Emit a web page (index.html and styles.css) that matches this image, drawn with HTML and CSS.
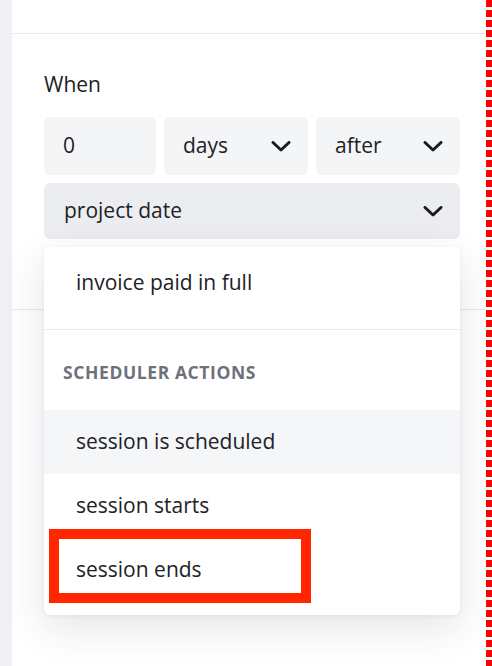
FILE: index.html
```html
<!DOCTYPE html>
<html lang="en">
<head>
<meta charset="utf-8">
<title>When trigger</title>
<link rel="stylesheet" href="styles.css">
</head>
<body>
<div class="page">
  <div class="strip"></div>
  <main class="panel">
    <div class="top"></div>
    <section class="when">
      <div class="label">When</div>
      <div class="row">
        <div class="field">0</div>
        <div class="field select">
          <span>days</span>
          <svg class="chev" viewBox="0 0 20 11"><path d="M2 1.5 L10 9 L18 1.5"/></svg>
        </div>
        <div class="field select">
          <span>after</span>
          <svg class="chev" viewBox="0 0 20 11"><path d="M2 1.5 L10 9 L18 1.5"/></svg>
        </div>
      </div>
      <div class="combo">
        <div class="field select wide">
          <span>project date</span>
          <svg class="chev" viewBox="0 0 20 11"><path d="M2 1.5 L10 9 L18 1.5"/></svg>
        </div>
        <div class="menu">
          <div class="group first">
            <div class="item">invoice paid in full</div>
          </div>
          <div class="group">
            <div class="heading">SCHEDULER ACTIONS</div>
            <div class="item hover">session is scheduled</div>
            <div class="item">session starts</div>
            <div class="item">session ends</div>
          </div>
          <div class="highlight"></div>
        </div>
      </div>
    </section>
  </main>
  <div class="dash"></div>
</div>
</body>
</html>
```

FILE: styles.css
```css
* { box-sizing: border-box; }
html, body {
  margin: 0;
  padding: 0;
}
body {
  font-family: "Open Sans", Lato, sans-serif;
  color: #212226;
  background: #ffffff;
}
.page {
  display: flex;
  width: 492px;
  height: 666px;
  overflow: hidden;
}
.strip {
  width: 12px;
  flex: none;
  background: #eff0f3;
}
.panel {
  flex: 1;
  background: #ffffff;
  display: flex;
  flex-direction: column;
}
.top {
  height: 34px;
  border-bottom: 1px solid #e7e8eb;
  flex: none;
}
.when {
  padding: 38px 26px 70px 32px;
  border-bottom: 1px solid #e7e8eb;
}
.label {
  font-size: 21px;
  line-height: 24px;
  margin-bottom: 21px;
}
.row {
  display: grid;
  grid-template-columns: 112px 144px 144px;
  gap: 8px;
  margin-bottom: 8px;
}
.field {
  height: 58px;
  background: #f4f5f7;
  border-radius: 6px;
  display: flex;
  align-items: center;
  padding: 0 17px 3px 19px;
  font-size: 21px;
}
.select {
  justify-content: space-between;
}
.chev {
  width: 20px;
  height: 11px;
  fill: none;
  stroke: #1a1b1e;
  stroke-width: 3;
  stroke-linecap: round;
  stroke-linejoin: round;
  margin-top: 3px;
}
.combo {
  position: relative;
}
.wide {
  height: 56px;
  background: #ecedf0;
  padding-left: 20px;
}
.menu {
  position: absolute;
  top: 64px;
  left: 0;
  right: 0;
  background: #ffffff;
  border-radius: 6px;
  box-shadow: 0 12px 40px rgba(40, 50, 80, 0.13), 0 1px 4px rgba(40, 50, 80, 0.06);
  padding: 4px 0 13px;
  z-index: 2;
}
.group.first {
  padding-bottom: 14px;
  border-bottom: 1px solid #e7e8eb;
}
.item {
  height: 64px;
  display: flex;
  align-items: center;
  padding: 0 0 3px 32px;
  font-size: 21px;
}
.item.hover {
  background: #f5f6f8;
}
.heading {
  height: 80px;
  padding: 30px 0 0 19px;
  font-size: 17.5px;
  line-height: 24px;
  font-weight: 700;
  letter-spacing: 0.6px;
  color: #6e717b;
}
.highlight {
  position: absolute;
  left: 5px;
  top: 282px;
  width: 262px;
  height: 74px;
  border: 10px solid #ff2600;
}
.dash {
  width: 6px;
  flex: none;
  background: repeating-linear-gradient(to bottom, #ff0000 0 7px, transparent 7px 10px);
}
```
